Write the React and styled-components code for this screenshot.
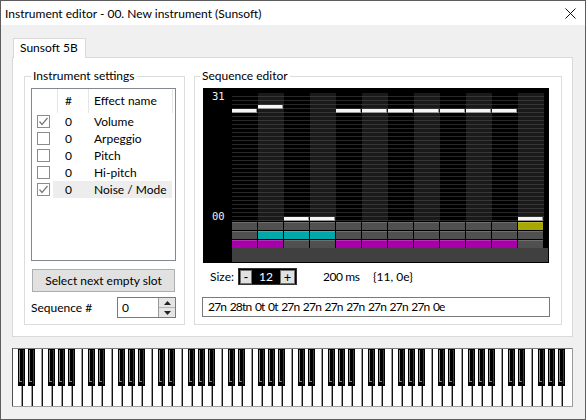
import React from 'react';
import styled, { createGlobalStyle } from 'styled-components';

const GlobalStyle = createGlobalStyle`
  html, body { margin: 0; padding: 0; background: #f0f0f0; }
  body { font-family: Lato, "Liberation Sans", sans-serif; font-size: 12px; color: #000; }
  * { box-sizing: border-box; }
`;

const Window = styled.div`
  width: 586px;
  height: 420px;
  border: 1px solid #5c5c5c;
  display: flex;
  flex-direction: column;
  background: #f0f0f0;
  overflow: hidden;
`;

const TitleBar = styled.div`
  height: 24px;
  flex: none;
  background: #fff;
  display: flex;
  align-items: center;
  justify-content: space-between;
  padding: 0 9px 0 4px;
`;

const Body = styled.div`
  flex: 1;
  display: flex;
  flex-direction: column;
  padding: 13px 12px 12px 11px;
`;

const TabStrip = styled.div`
  display: flex;
  padding-left: 1px;
`;

const Tab = styled.div`
  height: 20px;
  line-height: 18px;
  padding: 0 7px 0 6px;
  border: 1px solid #d9d9d9;
  border-bottom: none;
  background: #fff;
  margin-bottom: -1px;
  position: relative;
  z-index: 1;
`;

const TabPage = styled.div`
  height: 280px;
  border: 1px solid #d9d9d9;
  background: #fff;
  padding: 18px 10px 11px 11px;
  display: flex;
  gap: 9px;
`;

const GroupBox = styled.div`
  width: ${({ width }) => width}px;
  height: 249px;
  border: 1px solid #dcdcdc;
  display: flex;
  flex-direction: column;
  padding: ${({ pad }) => pad};
`;

const Legend = styled.div`
  align-self: flex-start;
  height: 16px;
  line-height: 16px;
  margin: -9px 0 0 ${({ offset }) => offset}px;
  padding: 0 2px;
  background: #fff;
`;

/* list view */
const ListView = styled.div`
  margin-top: 4px;
  width: 145px;
  height: 173px;
  border: 1px solid #828790;
  background: #fff;
`;

const HeaderRow = styled.div`
  display: flex;
  height: 24px;
`;

const HeaderCell = styled.div`
  width: ${({ w }) => w}px;
  border-right: 1px solid #e5e5e5;
  padding-left: ${({ pl }) => pl || 0}px;
  line-height: 24px;
`;

const Row = styled.div`
  display: flex;
  height: 17px;
  align-items: center;
`;

const CheckCell = styled.div`
  width: 21px;
  height: 17px;
  display: flex;
  align-items: center;
  padding-left: 5px;
`;

const RowBody = styled.div`
  display: flex;
  width: 119px;
  height: 17px;
  line-height: 17px;
  background: ${({ selected }) => (selected ? '#ededed' : 'transparent')};
`;

const NumCell = styled.div`
  width: 36px;
  padding-left: 12px;
`;

const NameCell = styled.div`
  padding-left: 5px;
`;

const Box = styled.span`
  width: 13px;
  height: 13px;
  border: 1px solid #8c8c8c;
  background: #fff;
  display: flex;
  align-items: center;
  justify-content: center;
`;

const Button = styled.div`
  margin: 8px 0 0 1px;
  width: 143px;
  height: 23px;
  line-height: 21px;
  text-align: center;
  background: #e1e1e1;
  border: 1px solid #adadad;
`;

const FieldRow = styled.div`
  display: flex;
  align-items: center;
  margin-top: ${({ mt }) => mt}px;
`;

const FieldLabel = styled.div`
  width: ${({ w }) => w}px;
  padding-left: ${({ pl }) => pl || 0}px;
  letter-spacing: ${({ tight }) => (tight ? '-0.4px' : 'normal')};
  flex: none;
`;

const SpinBox = styled.div`
  width: 60px;
  height: 21px;
  border: 1px solid #7a7a7a;
  display: flex;
`;

const SpinValue = styled.div`
  flex: 1;
  padding-left: 4px;
  line-height: 19px;
`;

const SpinButtons = styled.div`
  width: 17px;
  display: flex;
  flex-direction: column;
  border-left: 1px solid #9a9a9a;
`;

const SpinHalf = styled.div`
  flex: 1;
  background: #e5e5e5;
  display: flex;
  align-items: center;
  justify-content: center;
  & + & { border-top: 1px solid #b5b5b5; }
`;

/* sequence editor */
const Graph = styled.div`
  margin-top: 4px;
  width: 346px;
  height: 175px;
  border: 1px dotted #000;
  background: #000;
  flex: none;
  svg { display: block; }
`;

const Stepper = styled.div`
  width: 59px;
  height: 17px;
  border: 1px solid #333;
  background: #000;
  display: flex;
  align-items: center;
  padding: 0 1px;
`;

const StepButton = styled.div`
  width: ${({ w }) => w}px;
  height: 14px;
  background: #e1e1e1;
  border: 1px solid #707070;
  line-height: 12px;
  text-align: center;
  font-size: 13px;
`;

const StepValue = styled.div`
  flex: 1;
  color: #fff;
  text-align: right;
  padding-right: 7px;
  line-height: 15px;
`;

const TextBox = styled.div`
  margin: 12px 0 0 -1px;
  width: 348px;
  height: 20px;
  border: 1px solid #7a7a7a;
  padding-left: 5px;
  line-height: 18px;
  letter-spacing: -0.8px;
  word-spacing: 1.2px;
  background: #fff;
`;

const PianoWrap = styled.div`
  margin-top: 11px;
  height: 59px;
  svg { display: block; }
`;

const Check = () => (
  <svg width="11" height="11" viewBox="0 0 11 11">
    <polyline points="1.5,5.5 4,8.5 9.5,2" fill="none" stroke="#777" strokeWidth="1.2" />
  </svg>
);

const CloseIcon = () => (
  <svg width="11" height="11" viewBox="0 0 11 11">
    <path d="M0.5 0.5 L10.5 10.5 M10.5 0.5 L0.5 10.5" stroke="#111" strokeWidth="1" />
  </svg>
);

const Arrow = ({ up }) => (
  <svg width="7" height="4" viewBox="0 0 7 4">
    <polygon points={up ? '0,4 7,4 3.5,0' : '0,0 7,0 3.5,4'} fill="#222" />
  </svg>
);

const effects = [
  { name: 'Volume', on: true },
  { name: 'Arpeggio', on: false },
  { name: 'Pitch', on: false },
  { name: 'Hi-pitch', on: false },
  { name: 'Noise / Mode', on: true, selected: true },
];

const volumes = [27, 28, 0, 0, 27, 27, 27, 27, 27, 27, 27, 0];
const flagRows = [
  { color: '#a8a800', on: [11] },
  { color: '#00a8a8', on: [1, 2, 3] },
  { color: '#a800a8', on: [0, 1, 4, 5, 6, 7, 8, 9, 10] },
];

function SequenceGraph() {
  const x0 = 28;
  const cw = 26;
  const top = 4;
  const cols = volumes.map((v, i) => {
    const x = x0 + i * cw;
    const dark = i % 2 === 1;
    const lines = [];
    for (let l = 0; l < 32; l++) {
      lines.push(<rect key={l} x={x} y={top + l * 4 + 3} width={cw} height={1} fill={dark ? '#363636' : '#282828'} />);
    }
    const by = top + (31 - v) * 4;
    return (
      <g key={i}>
        <rect x={x} y={top} width={cw} height={128} fill={dark ? '#1a1a1a' : '#000'} />
        {lines}
        <rect x={x} y={by} width={cw - 1} height={4} fill="#9a9a9a" />
        <rect x={x} y={by} width={cw - 2} height={3} fill="#f6f6f6" />
      </g>
    );
  });
  const cells = flagRows.map((r, ri) =>
    volumes.map((_, i) => {
      const x = x0 + i * cw;
      const y = 133 + ri * 9;
      const fill = r.on.includes(i) ? r.color : '#505050';
      return (
        <g key={`${ri}-${i}`}>
          <rect x={x} y={y} width={cw - 1} height={8} fill={fill} />
          <rect x={x} y={y} width={cw - 1} height={1} fill="#fff" opacity="0.18" />
        </g>
      );
    })
  );
  return (
    <svg width="344" height="173" viewBox="0 0 344 173">
      <rect width="344" height="173" fill="#000" />
      {cols}
      {cells}
      <rect x={x0} y={159} width={316} height={14} fill="#404040" />
      <text x="8" y="11" fill="#f0f0f0" fontFamily="'DejaVu Sans Mono', monospace" fontSize="10.5">31</text>
      <text x="8" y="131" fill="#f0f0f0" fontFamily="'DejaVu Sans Mono', monospace" fontSize="10.5">00</text>
    </svg>
  );
}

function Piano() {
  const parts = [];
  for (let k = 1; k < 56; k++) {
    const x = k * 10;
    const full = k % 7 === 0 || k % 7 === 3;
    parts.push(<rect key={`s${k}`} x={x} y={full ? 1 : 37} width={1} height={full ? 57 : 21} fill="#111" />);
    parts.push(<rect key={`g${k}`} x={x - 1} y={full ? 1 : 37} width={1} height={full ? 57 : 21} fill="#9a9a9a" />);
  }
  for (let k = 1; k < 56; k++) {
    if ([1, 2, 4, 5, 6].includes(k % 7)) {
      const x = k * 10 - 4;
      parts.push(
        <g key={`b${k}`}>
          <rect x={x} y={1} width={7} height={37} fill="#000" />
          <rect x={x + 1} y={2} width={1} height={32} fill="#8c8c8c" />
          <rect x={x + 1} y={33} width={3} height={1} fill="#8c8c8c" />
          <rect x={x + 5} y={2} width={1} height={34} fill="#3a3a3a" />
        </g>
      );
    }
  }
  return (
    <svg width="561" height="59" viewBox="0 0 561 59">
      <rect width="561" height="59" fill="#fff" />
      {parts}
      <rect x="0" y="0" width="561" height="1" fill="#7a7a7a" />
      <rect x="0" y="0" width="1" height="59" fill="#505050" />
      <rect x="560" y="0" width="1" height="59" fill="#9a9a9a" />
      <rect x="0" y="58" width="561" height="1" fill="#a0a0a0" />
    </svg>
  );
}

export default function App() {
  return (
    <>
      <GlobalStyle />
      <Window>
        <TitleBar>
          <span>Instrument editor - 00. New instrument (Sunsoft)</span>
          <CloseIcon />
        </TitleBar>
        <Body>
          <TabStrip>
            <Tab>Sunsoft 5B</Tab>
          </TabStrip>
          <TabPage>
            <GroupBox width={161} pad="0 8px 0 6px">
              <Legend offset={0}>Instrument settings</Legend>
              <ListView>
                <HeaderRow>
                  <HeaderCell w={26} />
                  <HeaderCell w={31} pl={7}>#</HeaderCell>
                  <HeaderCell w={84} pl={5}>Effect name</HeaderCell>
                </HeaderRow>
                {effects.map((e) => (
                  <Row key={e.name}>
                    <CheckCell>
                      <Box>{e.on && <Check />}</Box>
                    </CheckCell>
                    <RowBody selected={e.selected}>
                      <NumCell>0</NumCell>
                      <NameCell>{e.name}</NameCell>
                    </RowBody>
                  </Row>
                ))}
              </ListView>
              <Button>Select next empty slot</Button>
              <FieldRow mt={5}>
                <FieldLabel w={86}>Sequence #</FieldLabel>
                <SpinBox>
                  <SpinValue>0</SpinValue>
                  <SpinButtons>
                    <SpinHalf><Arrow up /></SpinHalf>
                    <SpinHalf><Arrow /></SpinHalf>
                  </SpinButtons>
                </SpinBox>
              </FieldRow>
            </GroupBox>
            <GroupBox width={368} pad="0 12px 0 8px">
              <Legend offset={-3}>Sequence editor</Legend>
              <Graph>
                <SequenceGraph />
              </Graph>
              <FieldRow mt={5}>
                <FieldLabel w={35} pl={7}>Size:</FieldLabel>
                <Stepper>
                  <StepButton w={12}>-</StepButton>
                  <StepValue>12</StepValue>
                  <StepButton w={15}>+</StepButton>
                </Stepper>
                <FieldLabel w={76} pl={26} tight>200 ms</FieldLabel>
                <FieldLabel w={60}>{'{11, 0e}'}</FieldLabel>
              </FieldRow>
              <TextBox>27n 28tn 0t 0t 27n 27n 27n 27n 27n 27n 27n 0e</TextBox>
            </GroupBox>
          </TabPage>
          <PianoWrap>
            <Piano />
          </PianoWrap>
        </Body>
      </Window>
    </>
  );
}
